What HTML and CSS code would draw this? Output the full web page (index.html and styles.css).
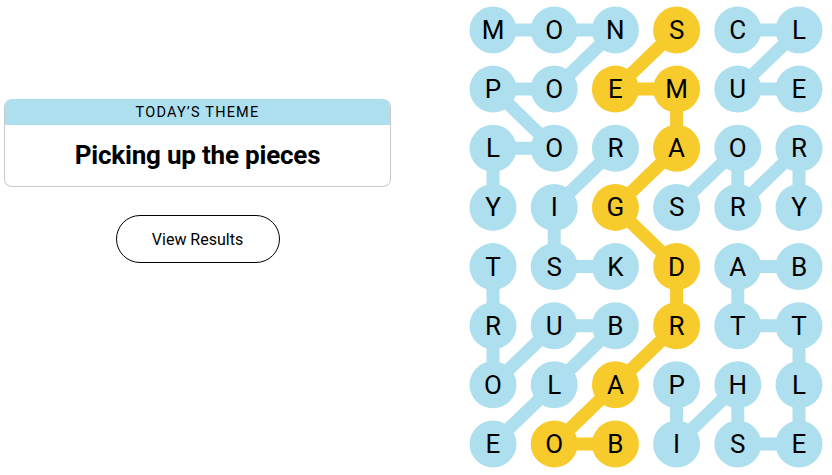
FILE: index.html
```html
<!DOCTYPE html>
<html>
<head>
<meta charset="utf-8">
<link rel="stylesheet" href="styles.css">
</head>
<body>
<div class="page">
  <div class="left">
    <div class="card">
      <div class="card-head">TODAY’S THEME</div>
      <div class="card-body">Picking up the pieces</div>
    </div>
    <button class="results">View Results</button>
  </div>
  <svg class="board" width="370" height="475" viewBox="0 0 370 475">
    <g class="lines blue">
      <line x1="31" y1="30" x2="92.2" y2="30"/>
      <line x1="92.2" y1="30" x2="153.4" y2="30"/>
      <line x1="153.4" y1="30" x2="92.2" y2="89.1"/>
      <line x1="92.2" y1="89.1" x2="31" y2="89.1"/>
      <line x1="31" y1="89.1" x2="92.2" y2="148.3"/>
      <line x1="92.2" y1="148.3" x2="31" y2="148.3"/>
      <line x1="31" y1="148.3" x2="31" y2="207.4"/>
      <line x1="275.8" y1="30" x2="337" y2="30"/>
      <line x1="337" y1="30" x2="275.8" y2="89.1"/>
      <line x1="275.8" y1="89.1" x2="337" y2="89.1"/>
      <line x1="153.4" y1="148.3" x2="92.2" y2="207.4"/>
      <line x1="92.2" y1="207.4" x2="92.2" y2="266.6"/>
      <line x1="92.2" y1="266.6" x2="153.4" y2="266.6"/>
      <line x1="214.6" y1="207.4" x2="275.8" y2="148.3"/>
      <line x1="275.8" y1="148.3" x2="275.8" y2="207.4"/>
      <line x1="275.8" y1="207.4" x2="337" y2="148.3"/>
      <line x1="337" y1="148.3" x2="337" y2="207.4"/>
      <line x1="31" y1="266.6" x2="31" y2="325.7"/>
      <line x1="31" y1="325.7" x2="31" y2="384.8"/>
      <line x1="31" y1="384.8" x2="92.2" y2="325.7"/>
      <line x1="92.2" y1="325.7" x2="153.4" y2="325.7"/>
      <line x1="153.4" y1="325.7" x2="92.2" y2="384.8"/>
      <line x1="92.2" y1="384.8" x2="31" y2="444"/>
      <line x1="337" y1="266.6" x2="275.8" y2="266.6"/>
      <line x1="275.8" y1="266.6" x2="275.8" y2="325.7"/>
      <line x1="275.8" y1="325.7" x2="337" y2="325.7"/>
      <line x1="337" y1="325.7" x2="337" y2="384.8"/>
      <line x1="337" y1="384.8" x2="337" y2="444"/>
      <line x1="337" y1="444" x2="275.8" y2="444"/>
      <line x1="275.8" y1="444" x2="275.8" y2="384.8"/>
      <line x1="275.8" y1="384.8" x2="214.6" y2="444"/>
      <line x1="214.6" y1="444" x2="214.6" y2="384.8"/>
    </g>
    <g class="lines gold">
      <line x1="214.6" y1="30" x2="153.4" y2="89.1"/>
      <line x1="153.4" y1="89.1" x2="214.6" y2="89.1"/>
      <line x1="214.6" y1="89.1" x2="214.6" y2="148.3"/>
      <line x1="214.6" y1="148.3" x2="153.4" y2="207.4"/>
      <line x1="153.4" y1="207.4" x2="214.6" y2="266.6"/>
      <line x1="214.6" y1="266.6" x2="214.6" y2="325.7"/>
      <line x1="214.6" y1="325.7" x2="153.4" y2="384.8"/>
      <line x1="153.4" y1="384.8" x2="92.2" y2="444"/>
      <line x1="92.2" y1="444" x2="153.4" y2="444"/>
    </g>
    <g class="dots">
      <circle class="dot blue" cx="31" cy="30" r="23.5"/><text class="letter" x="31" y="39">M</text>
      <circle class="dot blue" cx="92.2" cy="30" r="23.5"/><text class="letter" x="92.2" y="39">O</text>
      <circle class="dot blue" cx="153.4" cy="30" r="23.5"/><text class="letter" x="153.4" y="39">N</text>
      <circle class="dot gold" cx="214.6" cy="30" r="23.5"/><text class="letter" x="214.6" y="39">S</text>
      <circle class="dot blue" cx="275.8" cy="30" r="23.5"/><text class="letter" x="275.8" y="39">C</text>
      <circle class="dot blue" cx="337" cy="30" r="23.5"/><text class="letter" x="337" y="39">L</text>

      <circle class="dot blue" cx="31" cy="89.1" r="23.5"/><text class="letter" x="31" y="98.1">P</text>
      <circle class="dot blue" cx="92.2" cy="89.1" r="23.5"/><text class="letter" x="92.2" y="98.1">O</text>
      <circle class="dot gold" cx="153.4" cy="89.1" r="23.5"/><text class="letter" x="153.4" y="98.1">E</text>
      <circle class="dot gold" cx="214.6" cy="89.1" r="23.5"/><text class="letter" x="214.6" y="98.1">M</text>
      <circle class="dot blue" cx="275.8" cy="89.1" r="23.5"/><text class="letter" x="275.8" y="98.1">U</text>
      <circle class="dot blue" cx="337" cy="89.1" r="23.5"/><text class="letter" x="337" y="98.1">E</text>

      <circle class="dot blue" cx="31" cy="148.3" r="23.5"/><text class="letter" x="31" y="157.3">L</text>
      <circle class="dot blue" cx="92.2" cy="148.3" r="23.5"/><text class="letter" x="92.2" y="157.3">O</text>
      <circle class="dot blue" cx="153.4" cy="148.3" r="23.5"/><text class="letter" x="153.4" y="157.3">R</text>
      <circle class="dot gold" cx="214.6" cy="148.3" r="23.5"/><text class="letter" x="214.6" y="157.3">A</text>
      <circle class="dot blue" cx="275.8" cy="148.3" r="23.5"/><text class="letter" x="275.8" y="157.3">O</text>
      <circle class="dot blue" cx="337" cy="148.3" r="23.5"/><text class="letter" x="337" y="157.3">R</text>

      <circle class="dot blue" cx="31" cy="207.4" r="23.5"/><text class="letter" x="31" y="216.4">Y</text>
      <circle class="dot blue" cx="92.2" cy="207.4" r="23.5"/><text class="letter" x="92.2" y="216.4">I</text>
      <circle class="dot gold" cx="153.4" cy="207.4" r="23.5"/><text class="letter" x="153.4" y="216.4">G</text>
      <circle class="dot blue" cx="214.6" cy="207.4" r="23.5"/><text class="letter" x="214.6" y="216.4">S</text>
      <circle class="dot blue" cx="275.8" cy="207.4" r="23.5"/><text class="letter" x="275.8" y="216.4">R</text>
      <circle class="dot blue" cx="337" cy="207.4" r="23.5"/><text class="letter" x="337" y="216.4">Y</text>

      <circle class="dot blue" cx="31" cy="266.6" r="23.5"/><text class="letter" x="31" y="275.6">T</text>
      <circle class="dot blue" cx="92.2" cy="266.6" r="23.5"/><text class="letter" x="92.2" y="275.6">S</text>
      <circle class="dot blue" cx="153.4" cy="266.6" r="23.5"/><text class="letter" x="153.4" y="275.6">K</text>
      <circle class="dot gold" cx="214.6" cy="266.6" r="23.5"/><text class="letter" x="214.6" y="275.6">D</text>
      <circle class="dot blue" cx="275.8" cy="266.6" r="23.5"/><text class="letter" x="275.8" y="275.6">A</text>
      <circle class="dot blue" cx="337" cy="266.6" r="23.5"/><text class="letter" x="337" y="275.6">B</text>

      <circle class="dot blue" cx="31" cy="325.7" r="23.5"/><text class="letter" x="31" y="334.7">R</text>
      <circle class="dot blue" cx="92.2" cy="325.7" r="23.5"/><text class="letter" x="92.2" y="334.7">U</text>
      <circle class="dot blue" cx="153.4" cy="325.7" r="23.5"/><text class="letter" x="153.4" y="334.7">B</text>
      <circle class="dot gold" cx="214.6" cy="325.7" r="23.5"/><text class="letter" x="214.6" y="334.7">R</text>
      <circle class="dot blue" cx="275.8" cy="325.7" r="23.5"/><text class="letter" x="275.8" y="334.7">T</text>
      <circle class="dot blue" cx="337" cy="325.7" r="23.5"/><text class="letter" x="337" y="334.7">T</text>

      <circle class="dot blue" cx="31" cy="384.8" r="23.5"/><text class="letter" x="31" y="393.8">O</text>
      <circle class="dot blue" cx="92.2" cy="384.8" r="23.5"/><text class="letter" x="92.2" y="393.8">L</text>
      <circle class="dot gold" cx="153.4" cy="384.8" r="23.5"/><text class="letter" x="153.4" y="393.8">A</text>
      <circle class="dot blue" cx="214.6" cy="384.8" r="23.5"/><text class="letter" x="214.6" y="393.8">P</text>
      <circle class="dot blue" cx="275.8" cy="384.8" r="23.5"/><text class="letter" x="275.8" y="393.8">H</text>
      <circle class="dot blue" cx="337" cy="384.8" r="23.5"/><text class="letter" x="337" y="393.8">L</text>

      <circle class="dot blue" cx="31" cy="444" r="23.5"/><text class="letter" x="31" y="453">E</text>
      <circle class="dot gold" cx="92.2" cy="444" r="23.5"/><text class="letter" x="92.2" y="453">O</text>
      <circle class="dot gold" cx="153.4" cy="444" r="23.5"/><text class="letter" x="153.4" y="453">B</text>
      <circle class="dot blue" cx="214.6" cy="444" r="23.5"/><text class="letter" x="214.6" y="453">I</text>
      <circle class="dot blue" cx="275.8" cy="444" r="23.5"/><text class="letter" x="275.8" y="453">S</text>
      <circle class="dot blue" cx="337" cy="444" r="23.5"/><text class="letter" x="337" y="453">E</text>
    </g>
  </svg>
</div>
</body>
</html>
```
FILE: styles.css
```css
html, body {
  margin: 0;
  padding: 0;
  background: #ffffff;
}
.page {
  display: flex;
  width: 832px;
  height: 475px;
  font-family: Roboto, "Liberation Sans", sans-serif;
  color: #000;
}
.left {
  width: 395px;
  padding-top: 99px;
  display: flex;
  flex-direction: column;
  align-items: center;
}
.card {
  width: 387px;
  box-sizing: border-box;
  border: 1px solid #c9c9c9;
  border-top: none;
  border-radius: 8px;
  overflow: hidden;
}
.card-head {
  height: 26px;
  line-height: 27px;
  background: #aedfee;
  text-align: center;
  font-size: 14.5px;
  letter-spacing: 1.2px;
  font-weight: 400;
}
.card-body {
  height: 61px;
  line-height: 61px;
  text-align: center;
  font-size: 26px;
  font-weight: 700;
  letter-spacing: -0.2px;
}
.results {
  margin-top: 28px;
  width: 164px;
  height: 48px;
  border: 1px solid #000;
  border-radius: 24px;
  background: #fff;
  font-family: Roboto, "Liberation Sans", sans-serif;
  font-size: 16px;
  color: #000;
  padding: 0;
}
.board {
  margin-left: 67px;
  display: block;
}
.lines line {
  stroke-width: 13;
  stroke-linecap: round;
}
.lines.blue line { stroke: #aedfee; }
.lines.gold line { stroke: #f8cb2c; }
.dot.blue { fill: #aedfee; }
.dot.gold { fill: #f8cb2c; }
.letter {
  font-family: Roboto, "Liberation Sans", sans-serif;
  font-size: 26px;
  font-weight: 400;
  text-anchor: middle;
  fill: #000;
}
```
